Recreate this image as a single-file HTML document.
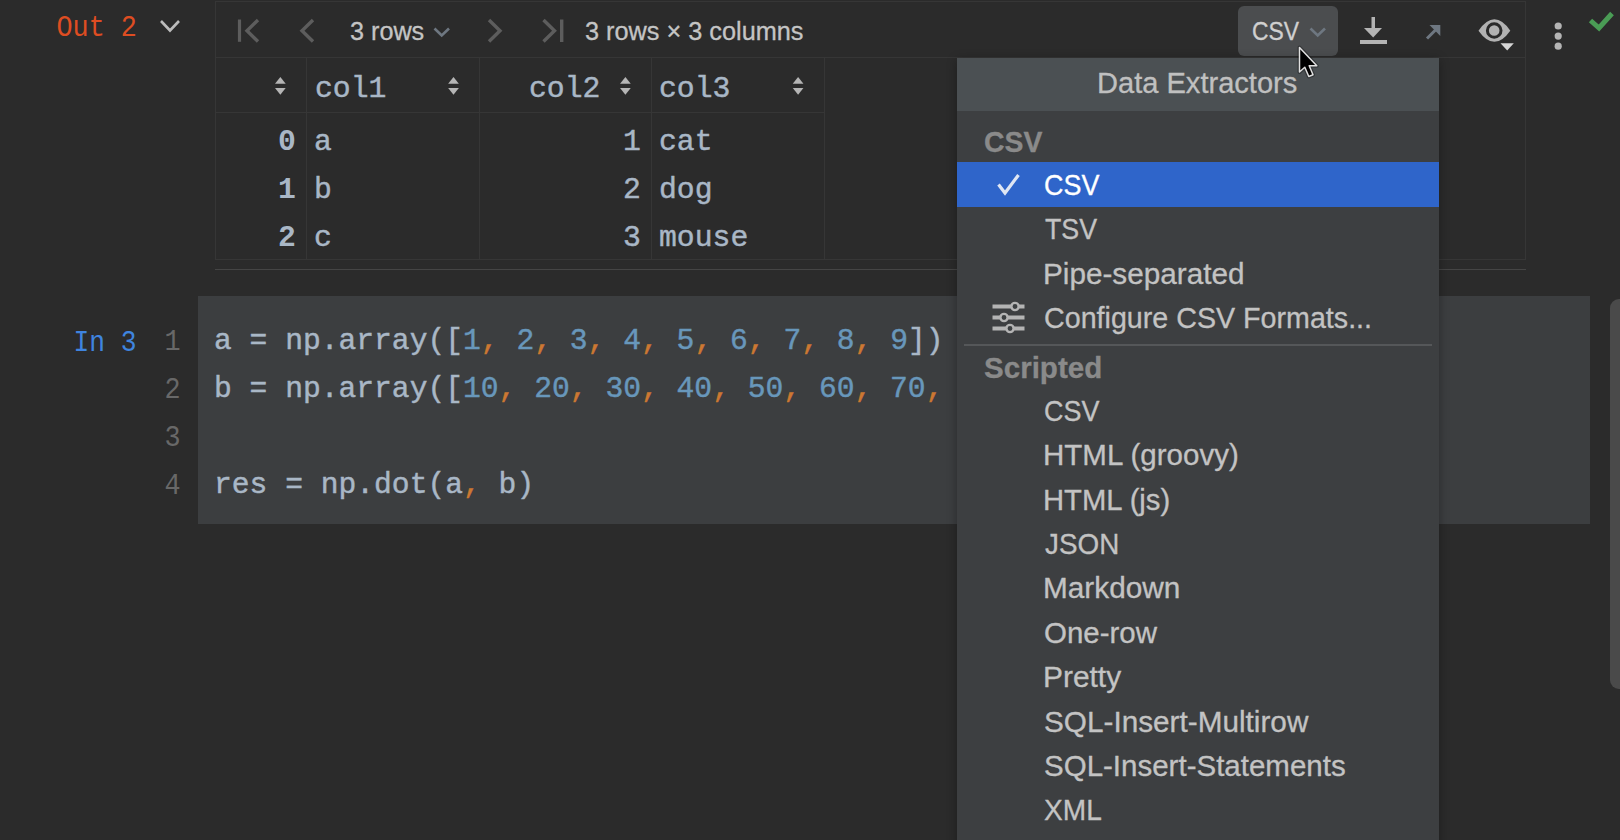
<!DOCTYPE html>
<html><head><meta charset="utf-8">
<style>
html,body{margin:0;padding:0;}
body{width:1620px;height:840px;overflow:hidden;background:#2b2b2b;position:relative;}
.a{position:absolute;}
.s{position:absolute;font-family:"Liberation Sans",sans-serif;line-height:1;white-space:pre;-webkit-text-stroke-width:0.3px;}
.m{position:absolute;font-family:"Liberation Mono",monospace;line-height:1;white-space:pre;-webkit-text-stroke-width:0.45px;}
.hl{position:absolute;height:1px;background:#363636;}
.vl{position:absolute;width:1px;background:#363636;}
svg{position:absolute;overflow:visible;}
.n{color:#6897bb}.c{color:#cc7832}
</style></head><body>

<!-- Out 2 label -->
<div class="m" style="left:56.5px;top:14px;font-size:26.8px;-webkit-text-stroke-width:0;color:#de4d22;transform-origin:0 0;transform:scaleY(1.1)">Out 2</div>
<svg style="left:0;top:0" width="1" height="1"><polyline points="161,21 170,30.5 179,21" fill="none" stroke="#bcbcbc" stroke-width="2.6"/></svg>

<!-- table frame -->
<div class="hl" style="left:215px;top:1px;width:1311px"></div>
<div class="vl" style="left:215px;top:1px;height:259px"></div>
<div class="vl" style="left:1525px;top:1px;height:259px"></div>
<div class="hl" style="left:215px;top:57px;width:1311px"></div>
<div class="hl" style="left:215px;top:112px;width:610px"></div>
<div class="hl" style="left:215px;top:259px;width:1311px"></div>
<div class="vl" style="left:306px;top:58px;height:201px"></div>
<div class="vl" style="left:479px;top:58px;height:201px"></div>
<div class="vl" style="left:651px;top:58px;height:201px"></div>
<div class="vl" style="left:824px;top:58px;height:201px"></div>
<div class="a" style="left:215px;top:269px;width:1311px;height:1px;background:#454545"></div>

<!-- toolbar -->
<svg style="left:0;top:0" width="1" height="1">
  <line x1="239.5" y1="19.5" x2="239.5" y2="41.8" stroke="#5d5d5d" stroke-width="3.2"/>
  <polyline points="258,20 247,30.7 258,41.5" fill="none" stroke="#5d5d5d" stroke-width="3.4"/>
  <polyline points="313,20 302,30.7 313,41.5" fill="none" stroke="#5d5d5d" stroke-width="3.4"/>
  <polyline points="434.5,28.5 441.7,35.5 449,28.5" fill="none" stroke="#6e7781" stroke-width="2.6"/>
  <polyline points="489,20 500,30.7 489,41.5" fill="none" stroke="#5d5d5d" stroke-width="3.4"/>
  <polyline points="543.5,20 554.5,30.7 543.5,41.5" fill="none" stroke="#5d5d5d" stroke-width="3.4"/>
  <line x1="561.7" y1="19.5" x2="561.7" y2="42" stroke="#5d5d5d" stroke-width="3.4"/>
</svg>
<div class="s" style="transform-origin:0 0;transform:scaleX(1.008);left:350.1px;top:18.8px;font-size:25px;color:#c4c4c4">3 rows</div>
<div class="s" style="transform-origin:0 0;transform:scaleX(1.011);left:584.7px;top:18.8px;font-size:25px;color:#c4c4c4">3 rows × 3 columns</div>

<!-- right toolbar -->
<div class="a" style="left:1238px;top:6px;width:100px;height:50px;border-radius:6px;background:#4b4d4f"></div>
<div class="s" style="transform-origin:0 0;transform:scaleX(0.914);left:1252.1px;top:18.5px;font-size:25px;color:#d0d0d0">CSV</div>
<svg style="left:0;top:0" width="1" height="1">
  <polyline points="1310.5,28.5 1317.7,35.5 1325,28.5" fill="none" stroke="#6e7781" stroke-width="2.6"/>
  <!-- download -->
  <rect x="1371.5" y="17" width="3.5" height="12" fill="#b4b4b4"/>
  <polygon points="1364,28 1382,28 1373.2,37.5" fill="#b4b4b4"/>
  <rect x="1360" y="40" width="27" height="4" fill="#b4b4b4"/>
  <!-- arrow -->
  <line x1="1427" y1="38.5" x2="1437" y2="28.5" stroke="#6e7781" stroke-width="3"/>
  <polygon points="1429.5,25 1440.3,25 1440.3,36" fill="#6e7781"/>
  <!-- eye -->
  <path d="M1478.5,30.7 Q1494.4,8 1510.3,30.7 Q1494.4,53 1478.5,30.7 Z" fill="#b2b2b2"/>
  <circle cx="1494.2" cy="30.5" r="6.8" fill="none" stroke="#2b2b2b" stroke-width="3"/>
  <polygon points="1500.5,43.2 1513.8,43.2 1507.2,50.5" fill="#d6d6d6"/>
  <!-- more -->
  <circle cx="1558.2" cy="26" r="3.6" fill="#b4b4b4"/>
  <circle cx="1558.2" cy="36.1" r="3.6" fill="#b4b4b4"/>
  <circle cx="1558.2" cy="46.2" r="3.6" fill="#b4b4b4"/>
  <!-- green check -->
  <polyline points="1590.5,20.5 1599,28 1612,13.5" fill="none" stroke="#4a9c55" stroke-width="5"/>
</svg>

<!-- table header -->
<svg style="left:0;top:0" width="1" height="1" id="sorts"><g fill="#b5b5b5"><polygon points="275.0,83.8 285.70000000000005,83.8 280.35,77.1"/><polygon points="275.0,88 285.70000000000005,88 280.35,94.7"/><polygon points="448.15,83.8 458.85,83.8 453.5,77.1"/><polygon points="448.15,88 458.85,88 453.5,94.7"/><polygon points="620.05,83.8 630.75,83.8 625.4,77.1"/><polygon points="620.05,88 630.75,88 625.4,94.7"/><polygon points="792.75,83.8 803.45,83.8 798.1,77.1"/><polygon points="792.75,88 803.45,88 798.1,94.7"/></g></svg>
<div class="m" style="left:315px;top:75.4px;font-size:29.75px;color:#a9b7c6">col1</div>
<div class="m" style="left:529px;top:75.4px;font-size:29.75px;color:#a9b7c6">col2</div>
<div class="m" style="left:659px;top:75.4px;font-size:29.75px;color:#a9b7c6">col3</div>

<!-- table rows -->
<div class="m" style="left:278px;top:127.8px;font-size:29.75px;color:#a9b7c6;font-weight:bold;-webkit-text-stroke-width:0">0</div>
<div class="m" style="left:278px;top:175.8px;font-size:29.75px;color:#a9b7c6;font-weight:bold;-webkit-text-stroke-width:0">1</div>
<div class="m" style="left:278px;top:223.8px;font-size:29.75px;color:#a9b7c6;font-weight:bold;-webkit-text-stroke-width:0">2</div>
<div class="m" style="left:314px;top:127.8px;font-size:29.75px;color:#a9b7c6">a</div>
<div class="m" style="left:314px;top:175.8px;font-size:29.75px;color:#a9b7c6">b</div>
<div class="m" style="left:314px;top:223.8px;font-size:29.75px;color:#a9b7c6">c</div>
<div class="m" style="left:623px;top:127.8px;font-size:29.75px;color:#a9b7c6">1</div>
<div class="m" style="left:623px;top:175.8px;font-size:29.75px;color:#a9b7c6">2</div>
<div class="m" style="left:623px;top:223.8px;font-size:29.75px;color:#a9b7c6">3</div>
<div class="m" style="left:659px;top:127.8px;font-size:29.75px;color:#a9b7c6">cat</div>
<div class="m" style="left:659px;top:175.8px;font-size:29.75px;color:#a9b7c6">dog</div>
<div class="m" style="left:659px;top:223.8px;font-size:29.75px;color:#a9b7c6">mouse</div>

<!-- code cell -->
<div class="a" style="left:198px;top:296px;width:1392px;height:228px;background:#3c3e40"></div>
<div class="m" style="left:73.5px;top:328.5px;font-size:26.3px;-webkit-text-stroke-width:0;color:#3f84df;transform-origin:0 0;transform:scaleY(1.1)">In 3</div>
<div class="m" style="left:164.5px;top:328px;font-size:26.8px;-webkit-text-stroke-width:0;color:#686868;transform-origin:0 0;transform:scaleY(1.1)">1</div>
<div class="m" style="left:164.5px;top:376px;font-size:26.8px;-webkit-text-stroke-width:0;color:#686868;transform-origin:0 0;transform:scaleY(1.1)">2</div>
<div class="m" style="left:164.5px;top:424px;font-size:26.8px;-webkit-text-stroke-width:0;color:#686868;transform-origin:0 0;transform:scaleY(1.1)">3</div>
<div class="m" style="left:164.5px;top:472px;font-size:26.8px;-webkit-text-stroke-width:0;color:#686868;transform-origin:0 0;transform:scaleY(1.1)">4</div>
<div class="m" style="left:214px;top:327px;font-size:29.65px;color:#a9b7c6">a = np.array([<span class="n">1</span><span class="c">,</span> <span class="n">2</span><span class="c">,</span> <span class="n">3</span><span class="c">,</span> <span class="n">4</span><span class="c">,</span> <span class="n">5</span><span class="c">,</span> <span class="n">6</span><span class="c">,</span> <span class="n">7</span><span class="c">,</span> <span class="n">8</span><span class="c">,</span> <span class="n">9</span>])</div>
<div class="m" style="left:214px;top:375px;font-size:29.65px;color:#a9b7c6">b = np.array([<span class="n">10</span><span class="c">,</span> <span class="n">20</span><span class="c">,</span> <span class="n">30</span><span class="c">,</span> <span class="n">40</span><span class="c">,</span> <span class="n">50</span><span class="c">,</span> <span class="n">60</span><span class="c">,</span> <span class="n">70</span><span class="c">,</span></div>
<div class="m" style="left:214px;top:471px;font-size:29.65px;color:#a9b7c6">res = np.dot(a<span class="c">,</span> b)</div>

<!-- scrollbar -->
<div class="a" style="left:1610px;top:299px;width:20px;height:390px;border-radius:9px;background:#4a4a4a"></div>

<!-- popup -->
<div class="a" style="left:957px;top:57.5px;width:482px;height:800px;background:#3d3f41;box-shadow:0 2px 10px rgba(0,0,0,0.32)"></div>
<div class="a" style="left:957px;top:57.5px;width:482px;height:53.5px;background:#4b5053"></div>
<div class="s" style="transform-origin:0 0;transform:scaleX(0.992);left:1096.8px;top:68px;font-size:29.3px;color:#c0c0c0">Data Extractors</div>
<div class="s" style="transform-origin:0 0;transform:scaleX(0.969);left:983.5px;top:127px;font-size:29.3px;color:#8a8a8a;font-weight:bold">CSV</div>
<div class="a" style="left:957px;top:162px;width:482px;height:45px;background:#2f65ca"></div>
<svg style="left:0;top:0" width="1" height="1"><polyline points="998.5,184.5 1005,193 1018.5,175" fill="none" stroke="#dfe6f3" stroke-width="3.2"/></svg>
<div class="s" style="transform-origin:0 0;transform:scaleX(0.919);left:1043.8px;top:170px;font-size:29.3px;color:#ffffff">CSV</div>
<div class="s" style="transform-origin:0 0;transform:scaleX(0.914);left:1044.7px;top:214px;font-size:29.3px;color:#c3c3c3">TSV</div>
<div class="s" style="transform-origin:0 0;transform:scaleX(1.014);left:1042.7px;top:258.5px;font-size:29.3px;color:#c3c3c3">Pipe-separated</div>
<svg style="left:0;top:0" width="1" height="1">
  <g fill="#b4b4b4">
  <rect x="992.5" y="304.5" width="32" height="4"/>
  <rect x="992.5" y="315.5" width="32" height="4"/>
  <rect x="992.5" y="326.5" width="32" height="4"/>
  </g>
  <g fill="#3c3f41" stroke="#b4b4b4" stroke-width="2.4">
  <circle cx="1015" cy="306.5" r="3.6"/>
  <circle cx="1004" cy="317.5" r="3.6"/>
  <circle cx="1010" cy="328.5" r="3.6"/>
  </g>
</svg>
<div class="s" style="transform-origin:0 0;transform:scaleX(0.978);left:1043.7px;top:302.5px;font-size:29.3px;color:#c3c3c3">Configure CSV Formats...</div>
<div class="a" style="left:964px;top:344px;width:468px;height:1.5px;background:#555759"></div>
<div class="s" style="transform-origin:0 0;transform:scaleX(1.009);left:983.5px;top:352.5px;font-size:29.3px;color:#8a8a8a;font-weight:bold">Scripted</div>
<div class="s" style="transform-origin:0 0;transform:scaleX(0.919);left:1043.8px;top:395.7px;font-size:29.3px;color:#c3c3c3">CSV</div>
<div class="s" style="transform-origin:0 0;transform:scaleX(1.008);left:1043.0px;top:440.1px;font-size:29.3px;color:#c3c3c3">HTML (groovy)</div>
<div class="s" style="transform-origin:0 0;transform:scaleX(0.998);left:1043.0px;top:484.5px;font-size:29.3px;color:#c3c3c3">HTML (js)</div>
<div class="s" style="transform-origin:0 0;transform:scaleX(0.95);left:1045.0px;top:528.9px;font-size:29.3px;color:#c3c3c3">JSON</div>
<div class="s" style="transform-origin:0 0;transform:scaleX(1.016);left:1043.0px;top:573.3px;font-size:29.3px;color:#c3c3c3">Markdown</div>
<div class="s" style="transform-origin:0 0;transform:scaleX(1.006);left:1044.0px;top:617.7px;font-size:29.3px;color:#c3c3c3">One-row</div>
<div class="s" style="transform-origin:0 0;transform:scaleX(1.021);left:1043.0px;top:662.1px;font-size:29.3px;color:#c3c3c3">Pretty</div>
<div class="s" style="transform-origin:0 0;transform:scaleX(1.015);left:1044.0px;top:706.5px;font-size:29.3px;color:#c3c3c3">SQL-Insert-Multirow</div>
<div class="s" style="transform-origin:0 0;transform:scaleX(1.007);left:1044.0px;top:750.9px;font-size:29.3px;color:#c3c3c3">SQL-Insert-Statements</div>
<div class="s" style="transform-origin:0 0;transform:scaleX(0.959);left:1044.0px;top:795.3px;font-size:29.3px;color:#c3c3c3">XML</div>

<!-- cursor -->
<svg style="left:0;top:0" width="1" height="1">
  <path d="M1299.5,47.5 L1299.5,72 L1304.8,67.3 L1308.8,76.5 L1313,74.8 L1309.2,65.8 L1316.8,65.8 Z" fill="none" stroke="rgba(0,0,0,0.3)" stroke-width="4" stroke-linejoin="round"/>
  <path d="M1299.5,47.5 L1299.5,72 L1304.8,67.3 L1308.8,76.5 L1313,74.8 L1309.2,65.8 L1316.8,65.8 Z" fill="#000" stroke="#e0e0e0" stroke-width="1.5" stroke-linejoin="round"/>
</svg>

</body></html>
